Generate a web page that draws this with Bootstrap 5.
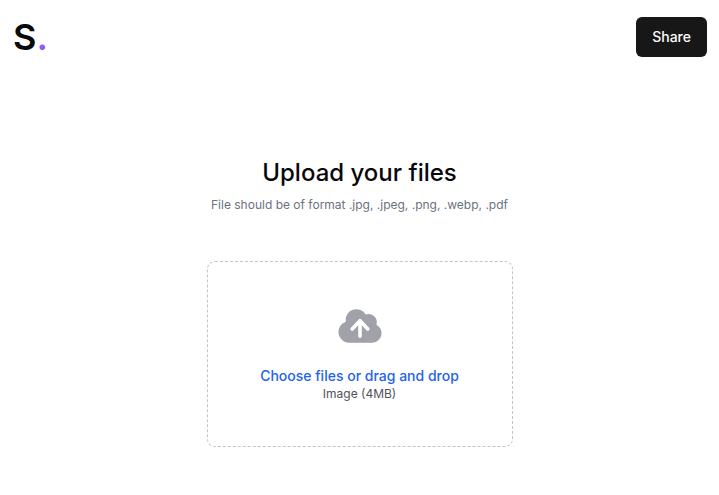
<!DOCTYPE html>
<html lang="en">
<head>
<meta charset="utf-8">
<meta name="viewport" content="width=device-width, initial-scale=1">
<title>Upload your files</title>
<link href="https://cdn.jsdelivr.net/npm/bootstrap@5.3.0/dist/css/bootstrap.min.css" rel="stylesheet">
<style>
body { font-family: Inter, sans-serif; color: #09090b; background: #fff; }
.topbar { padding: 13px 12px 0 13px; }
.brand { font-size: 36px; line-height: 48px; font-weight: 600; color: #0a0a0a; }
.brand span { color: #8b5cf6; }
.share { --bs-btn-bg: #171717; --bs-btn-color: #fafafa; --bs-btn-hover-bg: #303030; --bs-btn-hover-color: #fff; height: 40px; padding: 0 16px 2px; font-size: 14px; font-weight: 500; border-radius: 6px; border: 0; }
.upload { padding: 96px 16px 48px; }
.upload h1 { font-size: 24px; line-height: 32px; font-weight: 500; }
.hint { font-size: 12px; line-height: 16px; color: #6b7280; }
.dropzone { width: 100%; max-width: 306px; padding: 40px 16px 46px; border: 1px dashed #c4c4c4; border-radius: 8px; cursor: pointer; }
.cloud { width: 48px; height: 48px; fill: #a1a1aa; }
.choose { margin-top: 14px; font-size: 14px; line-height: 24px; font-weight: 500; color: #2563eb; }
.limit { font-size: 12px; line-height: 12px; color: #52525b; }
</style>
</head>
<body>
<header class="topbar d-flex justify-content-between align-items-center">
<a href="#" class="brand text-decoration-none">S<span>.</span></a>
<button type="button" class="btn share">Share</button>
</header>
<main class="upload d-flex flex-column align-items-center text-center">
<h1 class="mb-2">Upload your files</h1>
<p class="hint mb-5">File should be of format .jpg, .jpeg, .png, .webp, .pdf</p>
<label class="dropzone d-flex flex-column align-items-center" for="files">
<svg class="cloud" viewBox="0 0 20 20" aria-hidden="true"><path fill-rule="evenodd" clip-rule="evenodd" d="M5.5 17a4.5 4.5 0 0 1-1.44-8.765 4.5 4.5 0 0 1 8.302-3.046 3.5 3.5 0 0 1 4.504 4.272A4 4 0 0 1 15 17H5.5Zm3.75-2.75a.75.75 0 0 0 1.5 0V9.66l1.95 2.1a.75.75 0 1 0 1.1-1.02l-3.25-3.5a.75.75 0 0 0-1.1 0l-3.25 3.5a.75.75 0 1 0 1.1 1.02l1.95-2.1v4.59Z"/></svg>
<span class="choose">Choose files or drag and drop</span>
<span class="limit">Image (4MB)</span>
<input id="files" type="file" class="visually-hidden" multiple>
</label>
</main>
<script src="https://cdn.jsdelivr.net/npm/bootstrap@5.3.0/dist/js/bootstrap.bundle.min.js"></script>
</body>
</html>
